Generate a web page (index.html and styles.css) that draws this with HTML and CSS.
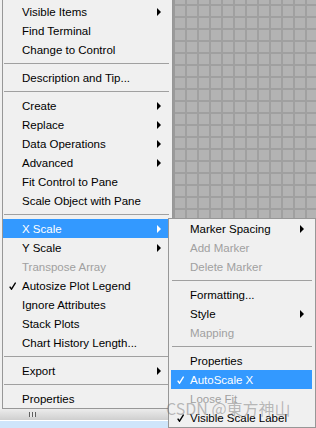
FILE: index.html
```html
<!DOCTYPE html>
<html lang="en">
<head>
    <meta charset="UTF-8">
    <title>Graph context menu</title>
    <link rel="stylesheet" href="styles.css">
</head>
<body>
    <div class="screen">
        <div class="workspace">
            <!-- main context menu -->
            <ul class="menu main-menu">
                <li class="item"><span class="mark"></span><span class="label">Visible Items</span><span class="arrow"></span></li>
                <li class="item"><span class="mark"></span><span class="label">Find Terminal</span></li>
                <li class="item"><span class="mark"></span><span class="label">Change to Control</span></li>
                <li class="sep"></li>
                <li class="item"><span class="mark"></span><span class="label">Description and Tip...</span></li>
                <li class="sep"></li>
                <li class="item"><span class="mark"></span><span class="label">Create</span><span class="arrow"></span></li>
                <li class="item"><span class="mark"></span><span class="label">Replace</span><span class="arrow"></span></li>
                <li class="item"><span class="mark"></span><span class="label">Data Operations</span><span class="arrow"></span></li>
                <li class="item"><span class="mark"></span><span class="label">Advanced</span><span class="arrow"></span></li>
                <li class="item"><span class="mark"></span><span class="label">Fit Control to Pane</span></li>
                <li class="item"><span class="mark"></span><span class="label">Scale Object with Pane</span></li>
                <li class="sep"></li>
                <li class="item active"><span class="mark"></span><span class="label">X Scale</span><span class="arrow"></span></li>
                <li class="item"><span class="mark"></span><span class="label">Y Scale</span><span class="arrow"></span></li>
                <li class="item disabled"><span class="mark"></span><span class="label">Transpose Array</span></li>
                <li class="item"><span class="mark"><svg width="7" height="8" viewBox="0 0 7 8"><path d="M0.7 4.6 L2.5 7.2 L6.6 0.6" fill="none" stroke="currentColor" stroke-width="1.4"/></svg></span><span class="label">Autosize Plot Legend</span></li>
                <li class="item"><span class="mark"></span><span class="label">Ignore Attributes</span></li>
                <li class="item"><span class="mark"></span><span class="label">Stack Plots</span></li>
                <li class="item"><span class="mark"></span><span class="label">Chart History Length...</span></li>
                <li class="sep"></li>
                <li class="item"><span class="mark"></span><span class="label">Export</span><span class="arrow"></span></li>
                <li class="sep"></li>
                <li class="item"><span class="mark"></span><span class="label">Properties</span></li>
            </ul>
            <div class="canvas"></div>
        </div>
        <div class="hscroll"><span class="grip"></span></div>
        <div class="taskbar"></div>

        <!-- X Scale submenu -->
        <ul class="menu submenu">
            <li class="item"><span class="mark"></span><span class="label">Marker Spacing</span><span class="arrow"></span></li>
            <li class="item disabled"><span class="mark"></span><span class="label">Add Marker</span></li>
            <li class="item disabled"><span class="mark"></span><span class="label">Delete Marker</span></li>
            <li class="sep"></li>
            <li class="item"><span class="mark"></span><span class="label">Formatting...</span></li>
            <li class="item"><span class="mark"></span><span class="label">Style</span><span class="arrow"></span></li>
            <li class="item disabled"><span class="mark"></span><span class="label">Mapping</span></li>
            <li class="sep"></li>
            <li class="item"><span class="mark"></span><span class="label">Properties</span></li>
            <li class="item active"><span class="mark"><svg width="7" height="8" viewBox="0 0 7 8"><path d="M0.7 4.6 L2.5 7.2 L6.6 0.6" fill="none" stroke="currentColor" stroke-width="1.4"/></svg></span><span class="label">AutoScale X</span></li>
            <li class="item disabled"><span class="mark"></span><span class="label">Loose Fit</span></li>
            <li class="item"><span class="mark"><svg width="7" height="8" viewBox="0 0 7 8"><path d="M0.7 4.6 L2.5 7.2 L6.6 0.6" fill="none" stroke="currentColor" stroke-width="1.4"/></svg></span><span class="label">Visible Scale Label</span></li>
        </ul>

        <div class="watermark">CSDN @東方神山</div>
    </div>
</body>
</html>
```

FILE: styles.css
```css
/* base */
body {
    margin: 0;
    font-family: 'Liberation Sans', Arial, sans-serif;
    font-size: 11.5px;
    color: #000;
}

.screen {
    position: relative;
    width: 316px;
    height: 428px;
    overflow: hidden;
    display: flex;
    flex-direction: column;
    background-color: #cfe5fa;
}

.workspace {
    display: flex;
    align-items: flex-start;
    background-color: #f0f0f0;
}

/* menus */
.menu {
    list-style: none;
    margin: 0;
    background-color: #f0f0f0;
    border: 1px solid #979797;
}

.main-menu {
    margin-left: 2px;
    width: 166px;
    padding: 2px 3px 0 0;
    border-top: none;
    flex-shrink: 0;
}

.submenu {
    position: absolute;
    left: 168px;
    top: 218px;
    width: 141px;
    padding: 0 3px 0 2px;
}

.item {
    display: flex;
    align-items: center;
    height: 19px;
    padding-right: 7px;
    white-space: nowrap;
}

.item .mark {
    width: 19px;
    flex-shrink: 0;
    display: flex;
    padding-left: 6px;
    box-sizing: border-box;
}

.item .label {
    flex: 1;
}

.item .arrow {
    width: 0;
    height: 0;
    border-left: 4px solid currentColor;
    border-top: 4px solid transparent;
    border-bottom: 4px solid transparent;
    margin-right: 1px;
}

.item.active {
    background-color: #3399ff;
    color: #fff;
}

.item.disabled {
    color: #a0a0a0;
}

.sep {
    height: 1px;
    margin: 4px 0 4px 1px;
    background-color: #a0a0a0;
}

/* block diagram canvas */
.canvas {
    flex: 1;
    height: 218px;
    border-left: 2px solid #9a9a9a;
    background-color: #b3b3b3;
    background-image:
        linear-gradient(to right, #a0a0a0 2px, transparent 2px),
        linear-gradient(to bottom, #a0a0a0 2px, transparent 2px);
    background-size: 12px 12px;
    background-position: 10px 4px;
}

/* scrollbar + strip */
.hscroll {
    height: 11px;
    display: flex;
    align-items: center;
    padding-left: 29px;
    background: linear-gradient(#ececec, #cfcfcf);
}

.grip {
    width: 7px;
    height: 5px;
    background: repeating-linear-gradient(to right, #606060 0 1px, #e8e8e8 1px 3px);
}

.taskbar {
    flex: 1;
    border-top: 1px solid #fff;
    background-color: #cfe5fa;
}

.watermark {
    position: absolute;
    left: 166px;
    top: 397px;
    font-family: 'Noto Sans CJK SC', sans-serif;
    font-size: 16px;
    line-height: 22px;
    color: rgba(110, 110, 110, 0.45);
    white-space: nowrap;
}
```
